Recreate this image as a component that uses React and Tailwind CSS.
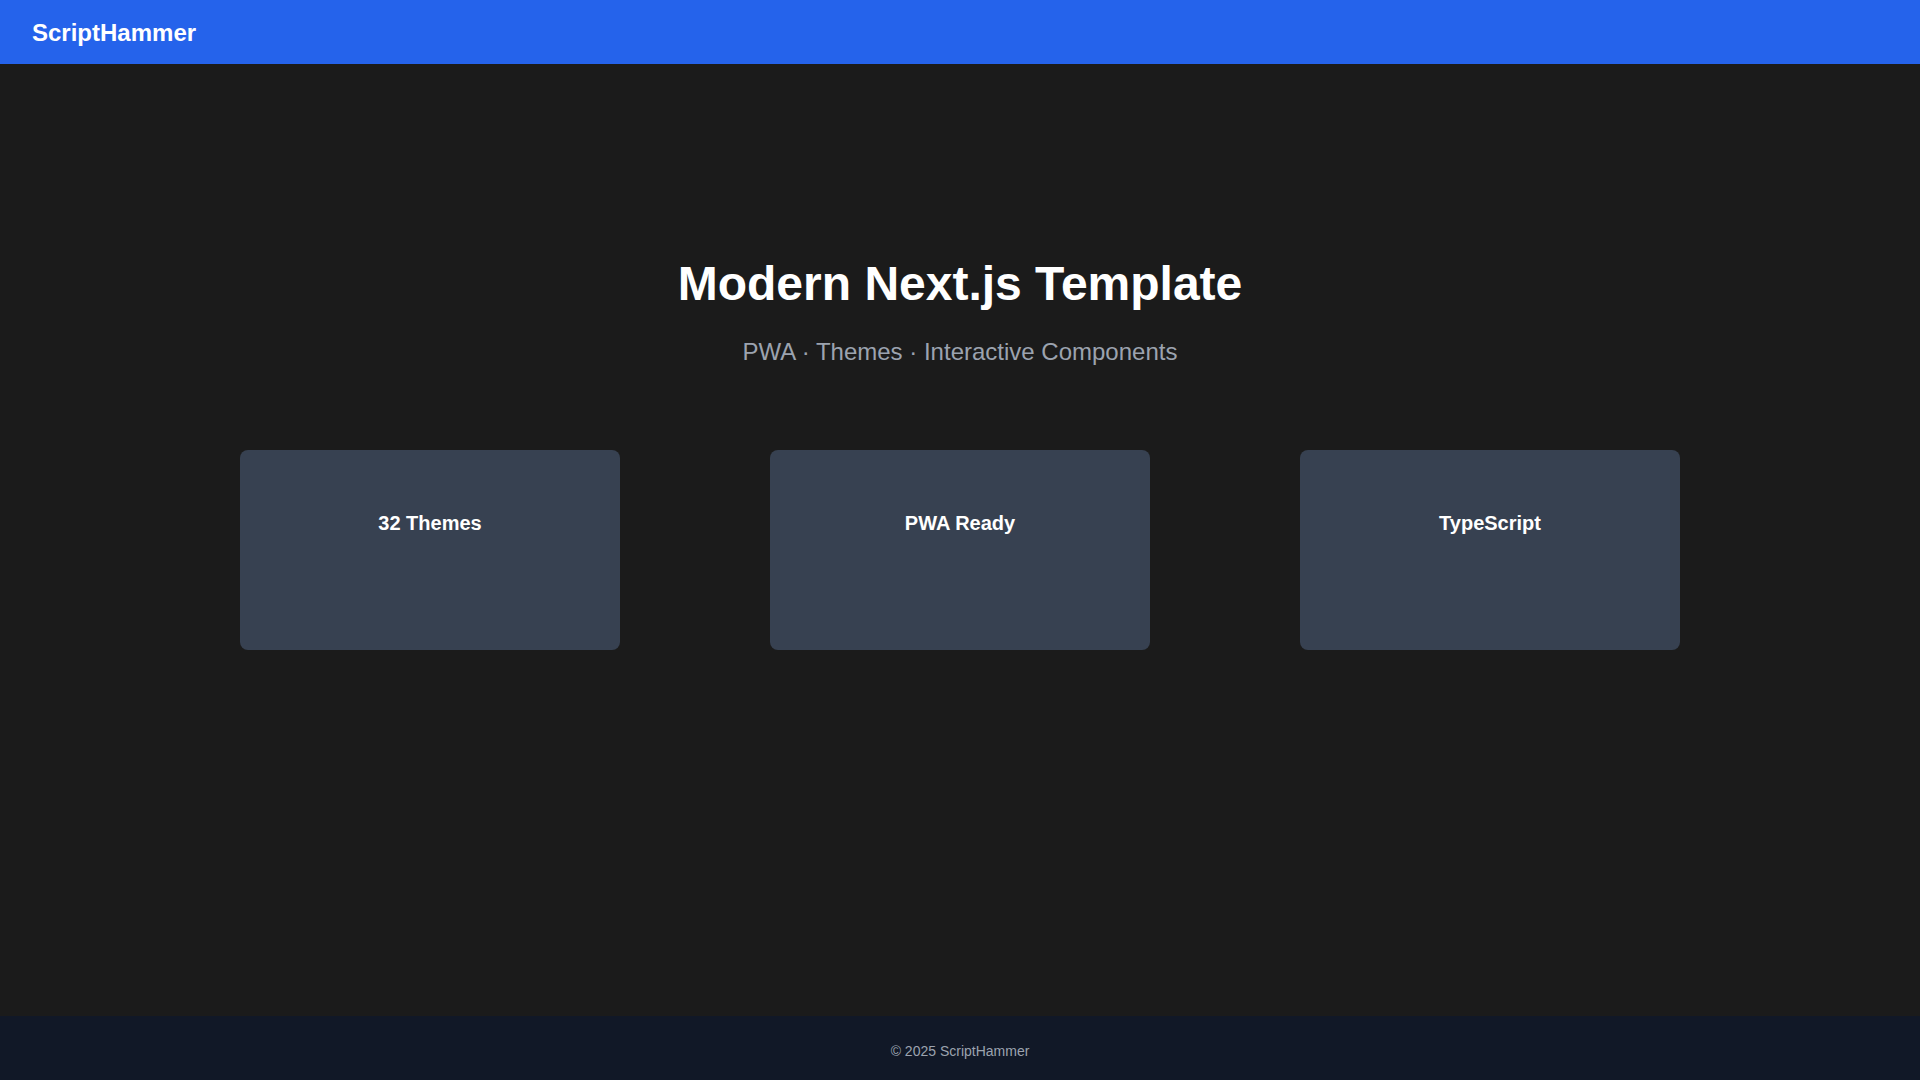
export default function App() {
  const features = ['32 Themes', 'PWA Ready', 'TypeScript']

  return (
    <div className="flex min-h-screen flex-col bg-[#1b1b1b] font-['Liberation_Sans',Arial,sans-serif]">
      {/* header */}
      <header className="flex h-16 shrink-0 items-center bg-[#2563eb] px-8 pt-0.5">
        <span className="text-2xl font-bold text-white">ScriptHammer</span>
      </header>

      {/* hero + features */}
      <main className="flex-1 px-60 pt-[196px]">
        <h1 className="text-center text-5xl leading-none font-bold text-white">Modern Next.js Template</h1>
        <p className="mt-7 text-center text-2xl leading-8 text-[#9ca3af]">
          PWA · Themes · Interactive Components
        </p>

        <div className="mx-auto mt-[82px] grid max-w-[1440px] grid-cols-3 gap-x-[150px]">
          {features.map((f) => (
            <div key={f} className="h-[200px] rounded-lg bg-[#374151] pt-[59px] text-center">
              <h2 className="text-xl leading-7 font-bold text-white">{f}</h2>
            </div>
          ))}
        </div>
      </main>

      {/* footer */}
      <footer className="flex h-16 shrink-0 items-center justify-center bg-[#111827] pt-1.5">
        <p className="text-sm text-[#9ca3af]">© 2025 ScriptHammer</p>
      </footer>
    </div>
  )
}
